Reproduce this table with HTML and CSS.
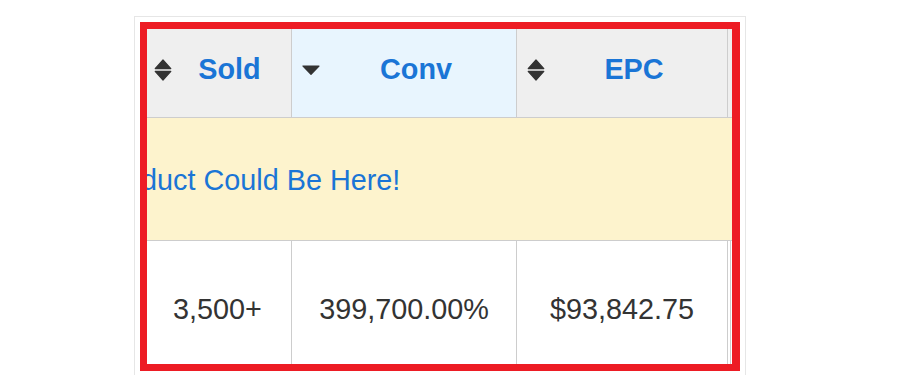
FILE: index.html
```html
<!DOCTYPE html>
<html lang="en">
<head>
<meta charset="utf-8">
<title>Top Products</title>
<link rel="stylesheet" href="styles.css">
</head>
<body>
<div class="frame">
  <div class="viewport">
    <div class="grid">
      <div class="th th-plain"></div>
      <div class="th">
        <svg class="sort" viewBox="0 0 18 22" aria-hidden="true"><path d="M1.2 9.6 L9 1 L16.8 9.6 Z M1.2 12.4 L16.8 12.4 L9 21 Z"/></svg>
        <span class="label">Sold</span>
      </div>
      <div class="th th-active">
        <svg class="sort-desc" viewBox="0 0 18 10" aria-hidden="true"><path d="M1 1 L17 1 L9 9.4 Z"/></svg>
        <span class="label">Conv</span>
      </div>
      <div class="th">
        <svg class="sort" viewBox="0 0 18 22" aria-hidden="true"><path d="M1.2 9.6 L9 1 L16.8 9.6 Z M1.2 12.4 L16.8 12.4 L9 21 Z"/></svg>
        <span class="label">EPC</span>
      </div>
      <div class="th th-plain"></div>
      <div class="th th-plain"></div>

      <div class="promo"><a class="promo-link">Your Product Could Be Here!</a></div>

      <div class="td"></div>
      <div class="td">3,500+</div>
      <div class="td">399,700.00%</div>
      <div class="td">$93,842.75</div>
      <div class="td"></div>
      <div class="td"></div>
    </div>
  </div>
</div>
</body>
</html>
```

FILE: styles.css
```css
html, body {
  margin: 0;
  padding: 0;
  background: #ffffff;
}

body {
  font-family: "Liberation Sans", Arial, sans-serif;
  overflow: hidden;
}

.frame {
  box-sizing: border-box;
  width: 612px;
  margin: 16px 0 0 134px;
  padding: 5px 5px 20px 5px;
  border: 1px solid #e6e6e6;
  border-bottom: none;
}

.viewport {
  box-sizing: border-box;
  width: 600px;
  height: 349px;
  border-style: solid;
  border-color: #ed1c24;
  border-width: 7px 8px 7px 7px;
  overflow: hidden;
}

.grid {
  display: grid;
  width: max-content;
  grid-template-columns: 123px 148px 225px 211px 3px 300px;
  grid-template-rows: 98px 123px 136px;
  margin: -9px 0 0 -126px;
  font-size: 28.8px;
}

.th,
.td {
  box-sizing: border-box;
  padding-top: 2px;
  border-right: 1px solid #cdcdcd;
  border-bottom: 1px solid #cdcdcd;
}

.th {
  display: flex;
  align-items: center;
  padding-left: 10px;
  background: #efefef;
  color: #1a75d6;
  font-weight: bold;
}

.th-active {
  background: #e8f5fe;
}

.sort {
  flex: none;
  width: 18px;
  height: 22px;
  margin-top: 1px;
  fill: #333333;
  stroke: #333333;
  stroke-width: 1.2;
  stroke-linejoin: round;
}

.sort-desc {
  flex: none;
  width: 18px;
  height: 10px;
  margin-top: 1px;
  fill: #333333;
  stroke: #333333;
  stroke-width: 1.2;
  stroke-linejoin: round;
}

.label {
  flex: 1;
  text-align: center;
  margin-left: -4px;
}

.promo {
  grid-column: 1 / -1;
  box-sizing: border-box;
  display: flex;
  align-items: center;
  padding: 3px 0 0 9px;
  background: #fdf3cd;
  border-bottom: 1px solid #cdcdcd;
}

.promo-link {
  color: #1a75d6;
  text-decoration: none;
  white-space: nowrap;
}

.td {
  display: flex;
  align-items: center;
  justify-content: center;
  background: #ffffff;
  color: #333333;
  white-space: nowrap;
}
```
